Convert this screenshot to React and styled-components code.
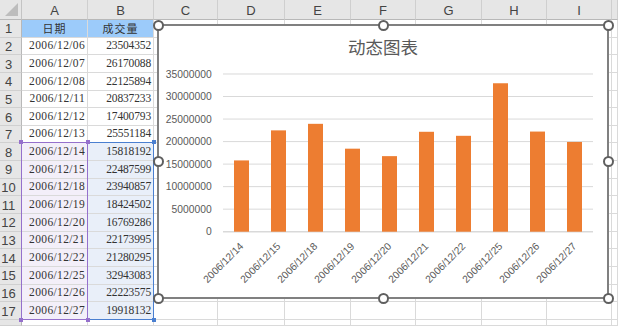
import React from 'react';
import styled, { createGlobalStyle } from 'styled-components';

const GlobalStyle = createGlobalStyle`
  html, body {
    margin: 0;
    padding: 0;
    background: #ffffff;
    overflow: hidden;
  }
`;

const COL_WIDTHS = [22, 66, 66, 64, 67, 66, 65, 66, 65, 65];
const COL_LETTERS = ['A', 'B', 'C', 'D', 'E', 'F', 'G', 'H', 'I', ''];

const ROWS = [
  ['2006/12/06', 23504352],
  ['2006/12/07', 26170088],
  ['2006/12/08', 22125894],
  ['2006/12/11', 20837233],
  ['2006/12/12', 17400793],
  ['2006/12/13', 25551184],
  ['2006/12/14', 15818192],
  ['2006/12/15', 22487599],
  ['2006/12/18', 23940857],
  ['2006/12/19', 18424502],
  ['2006/12/20', 16769286],
  ['2006/12/21', 22173995],
  ['2006/12/22', 21280295],
  ['2006/12/25', 32943083],
  ['2006/12/26', 22223575],
  ['2006/12/27', 19918132],
];

const Sheet = styled.div`
  position: relative;
  display: grid;
  grid-template-columns: ${COL_WIDTHS.map((w) => w + 'px').join(' ')} 1fr;
  grid-template-rows: 20px repeat(17, 17.65px) 1fr;
  width: 618px;
  height: 326px;
  overflow: hidden;
  font-family: "Liberation Sans", Arial, sans-serif;
`;

const place = (p) => `
  grid-row: ${p.$r + 1};
  grid-column: ${p.$c + 1};
`;

const Corner = styled.div`
  position: relative;
  grid-row: 1;
  grid-column: 1;
  background: #e6e6e6;
  border-right: 1px solid #c4c4c4;
  border-bottom: 1px solid #b8b8b8;
  box-sizing: border-box;

  &::after {
    content: '';
    position: absolute;
    right: 3px;
    bottom: 3px;
    width: 13px;
    height: 13px;
    background: #bdbdbd;
    clip-path: polygon(100% 0, 100% 100%, 0 100%);
  }
`;

const ColHeader = styled.div`
  ${place}
  display: flex;
  align-items: center;
  justify-content: center;
  background: #e6e6e6;
  border-right: 1px solid #cfcfcf;
  border-bottom: 1px solid #b8b8b8;
  box-sizing: border-box;
  color: #444444;
  font-size: 13px;
  padding-top: 1px;
`;

const RowHeader = styled.div`
  ${place}
  display: flex;
  align-items: center;
  justify-content: center;
  padding-right: 4px;
  background: #e6e6e6;
  border-right: 1px solid #b8b8b8;
  border-bottom: 1px solid #d0d0d0;
  box-sizing: border-box;
  color: #444444;
  font-size: 13px;
  padding-top: 1px;
`;

const Cell = styled.div`
  ${place}
  display: flex;
  align-items: ${(p) => (p.$head ? 'center' : 'flex-end')};
  justify-content: ${(p) => (p.$head ? 'center' : 'flex-end')};
  padding: ${(p) => (p.$head ? '0' : '0 2px 2px 0')};
  background: ${(p) => p.$fill || '#ffffff'};
  border-right: 1px solid #dadada;
  border-bottom: 1px solid #dadada;
  box-sizing: border-box;
  color: #333333;
  font-family: ${(p) =>
    p.$head
      ? '"Noto Sans CJK SC", sans-serif'
      : '"Liberation Serif", "Noto Serif", serif'};
  font-size: ${(p) => (p.$head ? '11px' : '11.5px')};
  letter-spacing: ${(p) => (p.$head ? '1px' : p.$c === 1 ? '0.35px' : '-0.15px')};
  line-height: 13px;
  white-space: nowrap;
  overflow: hidden;
`;

const RangeBox = styled.div`
  position: relative;
  z-index: ${(p) => p.$layer};
  grid-column: ${(p) => p.$col} / ${(p) => p.$col + 1};
  grid-row: 9 / 19;
  margin: -1px 0 0 -1px;
  border: 1px solid ${(p) => p.$color};
  pointer-events: none;
`;

const RangeHandle = styled.span`
  position: absolute;
  width: 4px;
  height: 4px;
  background: ${(p) => p.$color};
  ${(p) => (p.$top ? 'top: -3px;' : 'bottom: -3px;')}
  ${(p) => (p.$left ? 'left: -3px;' : 'right: -3px;')}
`;

const ChartFrame = styled.div`
  position: absolute;
  left: 157px;
  top: 24px;
  width: 452px;
  height: 275px;
  box-sizing: border-box;
  border: 2px solid #808080;
  background: #ffffff;
  z-index: 10;
  display: flex;
  flex-direction: column;
`;

const ChartTitle = styled.div`
  padding-top: 10px;
  height: 32px;
  box-sizing: border-box;
  text-align: center;
  font-family: "Noto Sans CJK SC", sans-serif;
  font-size: 17.5px;
  line-height: 22px;
  color: #595959;
`;

const Plot = styled.svg`
  display: block;
  width: 448px;
  height: 239px;
  font-family: "Liberation Sans", Arial, sans-serif;
`;

const Handle = styled.span`
  position: absolute;
  left: ${(p) => p.$x - 5.5}px;
  top: ${(p) => p.$y - 5.5}px;
  width: 11px;
  height: 11px;
  box-sizing: border-box;
  border: 2px solid #5f5f5f;
  border-radius: 50%;
  background: #ffffff;
`;

const HANDLES = [
  [-1, -1], [224, -1], [449, -1],
  [-1, 135.5], [449, 135.5],
  [-1, 272], [224, 272], [449, 272],
];

const PLOT_LEFT = 64;
const PLOT_RIGHT = 434;
const Y0 = 173.7;
const STEP = 22.53;
const MAX = 35000000;

function Chart() {
  const data = ROWS.slice(6);
  const band = (PLOT_RIGHT - PLOT_LEFT) / data.length;
  const ticks = [0, 1, 2, 3, 4, 5, 6, 7];

  return (
    <ChartFrame>
      {HANDLES.map(([x, y], i) => (
        <Handle key={i} $x={x} $y={y} />
      ))}
      <ChartTitle>动态图表</ChartTitle>
      <Plot viewBox="0 0 448 239">
        {ticks.map((t) => {
          const y = Y0 - t * STEP;
          return (
            <g key={t}>
              <line
                x1={PLOT_LEFT}
                x2={PLOT_RIGHT}
                y1={y}
                y2={y}
                stroke="#d9d9d9"
                strokeWidth={t === 0 ? 1.6 : 1}
              />
              <text x={52.7} y={y + 3.7} textAnchor="end" fontSize="10.3" fill="#595959">
                {t * 5000000}
              </text>
            </g>
          );
        })}
        {data.map(([date, value], i) => {
          const cx = PLOT_LEFT + band * (i + 0.5);
          const h = (value / MAX) * (STEP * 7);
          return (
            <g key={date}>
              <rect x={cx - 7.5} y={Y0 - h} width={15} height={h} fill="#ed7d31" />
              <text
                transform={`translate(${cx + 2.5}, ${Y0 + 15.3}) rotate(-45)`}
                textAnchor="end"
                fontSize="10.3"
                fill="#595959"
              >
                {date}
              </text>
            </g>
          );
        })}
      </Plot>
    </ChartFrame>
  );
}

function fillFor(row, col) {
  if (row === 1 && (col === 1 || col === 2)) return '#9ccbfa';
  if (row >= 8 && row <= 17 && col === 1) return '#f3eff9';
  if (row >= 8 && row <= 17 && col === 2) return '#e9eff9';
  return null;
}

function cellText(row, col) {
  if (row === 1 && col === 1) return '日期';
  if (row === 1 && col === 2) return '成交量';
  if (row >= 2 && row <= 17 && col === 1) return ROWS[row - 2][0];
  if (row >= 2 && row <= 17 && col === 2) return String(ROWS[row - 2][1]);
  return '';
}

export default function App() {
  const rowNums = Array.from({ length: 18 }, (_, i) => i + 1);

  return (
    <>
      <GlobalStyle />
      <Sheet>
        <Corner />
        {COL_LETTERS.map((l, i) => (
          <ColHeader key={'h' + i} $r={0} $c={i + 1}>
            {l}
          </ColHeader>
        ))}
        {rowNums.map((r) => (
          <React.Fragment key={r}>
            <RowHeader $r={r} $c={0}>
              {r <= 17 ? r : ''}
            </RowHeader>
            {COL_LETTERS.map((_, i) => {
              const c = i + 1;
              return (
                <Cell key={c} $r={r} $c={c} $head={r === 1} $fill={fillFor(r, c)}>
                  {cellText(r, c)}
                </Cell>
              );
            })}
          </React.Fragment>
        ))}
        <RangeBox $col={3} $color="#4a7fd0" $layer={2}>
          <RangeHandle $color="#4a7fd0" $top />
          <RangeHandle $color="#4a7fd0" />
        </RangeBox>
        <RangeBox $col={2} $color="#9570cc" $layer={3}>
          <RangeHandle $color="#9570cc" $top $left />
          <RangeHandle $color="#9570cc" $top />
          <RangeHandle $color="#9570cc" $left />
          <RangeHandle $color="#9570cc" />
        </RangeBox>
        <Chart />
      </Sheet>
    </>
  );
}
